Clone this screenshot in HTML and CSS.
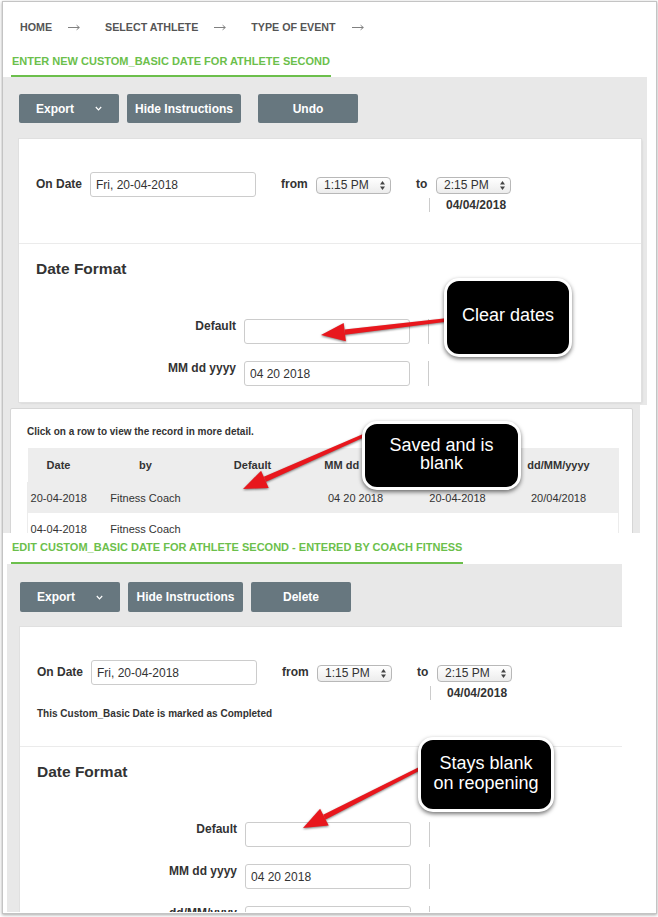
FILE: index.html
```html
<!DOCTYPE html>
<html lang="en">
<head>
<meta charset="utf-8">
<title>Custom_Basic Date</title>
<link rel="stylesheet" href="styles.css">
</head>
<body>
<div class="frame">
  <section class="shot shot-new">
    <nav class="crumbs">
      <span>HOME</span><svg class="crumb-arrow" width="12" height="7" viewBox="0 0 12 7"><path d="M0 3.5H11.3M8.6 1.2l2.7 2.3l-2.7 2.3" fill="none" stroke="#808080" stroke-width="1"/></svg>
      <span>SELECT ATHLETE</span><svg class="crumb-arrow" width="12" height="7" viewBox="0 0 12 7"><path d="M0 3.5H11.3M8.6 1.2l2.7 2.3l-2.7 2.3" fill="none" stroke="#808080" stroke-width="1"/></svg>
      <span>TYPE OF EVENT</span><svg class="crumb-arrow" width="12" height="7" viewBox="0 0 12 7"><path d="M0 3.5H11.3M8.6 1.2l2.7 2.3l-2.7 2.3" fill="none" stroke="#808080" stroke-width="1"/></svg>
    </nav>
    <div class="title-wrap"><h1 class="title">ENTER NEW CUSTOM_BASIC DATE FOR ATHLETE SECOND</h1></div>
    <div class="panel">
      <div class="toolbar">
        <button class="btn btn-export">Export<svg class="chev" width="7" height="5" viewBox="0 0 7 5"><polyline points="0.8,1 3.5,3.8 6.2,1" fill="none" stroke="#fff" stroke-width="1.2"/></svg></button>
        <button class="btn btn-hide">Hide Instructions</button>
        <button class="btn btn-undo">Undo</button>
      </div>
      <div class="card">
        <div class="when">
          <div class="date-row">
            <span class="lbl lbl-on">On Date</span>
            <input class="field field-date" type="text" value="Fri, 20-04-2018" readonly>
            <span class="lbl lbl-from">from</span>
            <div class="select"><span>1:15 PM</span><svg class="updown" width="5" height="9" viewBox="0 0 5 9"><polygon points="0,3.5 2.5,0 5,3.5"/><polygon points="0,5.5 2.5,9 5,5.5"/></svg></div>
            <span class="lbl lbl-to">to</span>
            <div class="to-col">
              <div class="select"><span>2:15 PM</span><svg class="updown" width="5" height="9" viewBox="0 0 5 9"><polygon points="0,3.5 2.5,0 5,3.5"/><polygon points="0,5.5 2.5,9 5,5.5"/></svg></div>
              <div class="sub"><span class="sub-bar"></span><span class="sub-date">04/04/2018</span></div>
            </div>
          </div>
        </div>
        <div class="formats">
          <h2 class="fmt-title">Date Format</h2>
          <div class="frow frow-first"><label class="flabel">Default</label><input class="field field-fmt" type="text" value="" readonly><span class="vbar"></span></div>
          <div class="frow"><label class="flabel">MM dd yyyy</label><input class="field field-fmt" type="text" value="04 20 2018" readonly><span class="vbar"></span></div>
        </div>
      </div>
    </div>
  </section>

  <section class="shot shot-list">
    <div class="list-card">
      <p class="hint">Click on a row to view the record in more detail.</p>
      <table class="records">
        <colgroup><col class="c1"><col class="c2"><col class="c3"><col class="c4"><col class="c5"><col class="c6"><col class="c7"></colgroup>
        <thead><tr><th>Date</th><th>by</th><th>Default</th><th>MM dd yyyy</th><th></th><th>dd/MM/yyyy</th><th></th></tr></thead>
        <tbody>
          <tr class="alt"><td>20-04-2018</td><td>Fitness Coach</td><td></td><td>04 20 2018</td><td>20-04-2018</td><td>20/04/2018</td><td></td></tr>
          <tr><td>04-04-2018</td><td>Fitness Coach</td><td></td><td></td><td></td><td></td><td></td></tr>
        </tbody>
      </table>
    </div>
  </section>

  <section class="shot shot-edit">
    <div class="title-wrap"><h1 class="title title-edit">EDIT CUSTOM_BASIC DATE FOR ATHLETE SECOND - ENTERED BY COACH FITNESS</h1></div>
    <div class="panel panel-edit">
      <div class="toolbar toolbar-edit">
        <button class="btn btn-export">Export<svg class="chev" width="7" height="5" viewBox="0 0 7 5"><polyline points="0.8,1 3.5,3.8 6.2,1" fill="none" stroke="#fff" stroke-width="1.2"/></svg></button>
        <button class="btn btn-hide-e">Hide Instructions</button>
        <button class="btn btn-delete">Delete</button>
      </div>
      <div class="card card-edit">
        <div class="when when-edit">
          <div class="date-row">
            <span class="lbl lbl-on">On Date</span>
            <input class="field field-date" type="text" value="Fri, 20-04-2018" readonly>
            <span class="lbl lbl-from">from</span>
            <div class="select"><span>1:15 PM</span><svg class="updown" width="5" height="9" viewBox="0 0 5 9"><polygon points="0,3.5 2.5,0 5,3.5"/><polygon points="0,5.5 2.5,9 5,5.5"/></svg></div>
            <span class="lbl lbl-to">to</span>
            <div class="to-col">
              <div class="select"><span>2:15 PM</span><svg class="updown" width="5" height="9" viewBox="0 0 5 9"><polygon points="0,3.5 2.5,0 5,3.5"/><polygon points="0,5.5 2.5,9 5,5.5"/></svg></div>
              <div class="sub"><span class="sub-bar"></span><span class="sub-date">04/04/2018</span></div>
            </div>
          </div>
          <p class="done">This Custom_Basic Date is marked as Completed</p>
        </div>
        <div class="formats">
          <h2 class="fmt-title">Date Format</h2>
          <div class="frow frow-first"><label class="flabel">Default</label><input class="field field-fmt" type="text" value="" readonly><span class="vbar"></span></div>
          <div class="frow"><label class="flabel">MM dd yyyy</label><input class="field field-fmt" type="text" value="04 20 2018" readonly><span class="vbar"></span></div>
          <div class="frow"><label class="flabel">dd/MM/yyyy</label><input class="field field-fmt" type="text" value="20/04/2018" readonly><span class="vbar"></span></div>
        </div>
      </div>
    </div>
  </section>
</div>

<svg class="arrows" viewBox="0 0 658 917" xmlns="http://www.w3.org/2000/svg">
  <g class="arrow">
    <polygon points="445.8,318.3 446.2,321.7 345.1,334.8 344.5,329.4"/>
    <polygon points="321,335 345.9,341.2 343.7,323"/>
  </g>
  <g class="arrow">
    <polygon points="364.3,433.4 365.7,436.6 266,481.8 263.8,476.8"/>
    <polygon points="243,489 268.7,487.9 261.1,470.7"/>
  </g>
  <g class="arrow">
    <polygon points="420.2,766.4 421.8,769.6 325.6,819.5 323.2,814.7"/>
    <polygon points="303,828 328.7,825.5 320.1,808.7"/>
  </g>
</svg>

<div class="callout callout-clear">Clear dates</div>
<div class="callout callout-saved">Saved and is<br>blank</div>
<div class="callout callout-stays">Stays blank<br>on reopening</div>
</body>
</html>
```

FILE: styles.css
```css
* { box-sizing: border-box; margin: 0; padding: 0; }
html, body { background: #fff; }
body {
  position: relative;
  width: 658px;
  height: 917px;
  padding: 1px 0 0 2px;
  overflow: hidden;
  font-family: "Liberation Sans", Arial, Helvetica, sans-serif;
  color: #333;
}

.frame {
  width: 655px;
  height: 913px;
  border: 1px solid #c4c4c4;
  box-shadow: 0 1px 3px rgba(0, 0, 0, 0.35);
  overflow: hidden;
  background: #fff;
}

.shot { overflow: hidden; }
.shot-new { height: 403px; }

/* breadcrumb */
.crumbs {
  display: flex;
  align-items: flex-start;
  height: 44px;
  padding: 18px 0 0 17px;
  font-size: 10.7px;
  font-weight: bold;
  line-height: 14px;
  color: #555;
}
.crumb-arrow {
  flex: none;
  margin: 3.5px 25px 0 16px;
}

/* green page title */
.title-wrap { height: 31px; padding-left: 8px; }
.title {
  display: inline-block;
  padding: 8px 1px 7px;
  font-size: 11px;
  line-height: 14px;
  font-weight: bold;
  color: #6cbf4c;
  border-bottom: 2px solid #6cbf4c;
}
.title-edit { padding: 8px 1px 8px; line-height: 13px; }

/* grey panel */
.panel {
  width: 644px;
  height: 328px;
  padding: 17px 0 0 16px;
  background: #e8e8e8;
  overflow: hidden;
}
.panel-edit {
  width: 615px;
  height: 348px;
  margin-left: 4px;
  padding: 18px 0 0 13px;
}

.toolbar { display: flex; height: 29px; }
.toolbar-edit { height: 30px; }
.btn {
  display: flex;
  align-items: center;
  justify-content: center;
  height: 100%;
  border: 0;
  border-radius: 2px;
  background: #67777f;
  color: #fff;
  font-family: inherit;
  font-size: 12px;
  font-weight: bold;
}
.btn-export { width: 100px; justify-content: flex-start; padding-left: 17px; }
.chev { margin-left: 21px; }
.btn-hide { width: 114px; margin-left: 8px; }
.btn-undo { width: 100px; margin-left: 17px; }
.btn-hide-e { width: 115px; margin-left: 8px; }
.btn-delete { width: 100px; margin-left: 8px; }

/* white card */
.card {
  width: 622px;
  height: 263px;
  margin-top: 16px;
  background: #fff;
  box-shadow: 0 0 0 1px #e0e0e0, 1px 1px 2px rgba(0, 0, 0, 0.12);
  overflow: hidden;
}
.card-edit { width: 602px; height: 300px; margin-top: 15px; }

.when {
  height: 105px;
  padding: 33px 0 0 17px;
  border-bottom: 1px solid #ebebeb;
}
.when-edit { height: 120px; }

.date-row { display: flex; align-items: flex-start; }
.lbl {
  font-size: 12px;
  font-weight: bold;
  line-height: 25px;
  white-space: nowrap;
}
.lbl-on { width: 54px; }
.lbl-from { width: 35px; margin-left: 25px; }
.lbl-to { width: 13px; margin-left: 25px; }

.field {
  height: 25px;
  padding: 0 5px;
  border: 1px solid #ccc;
  border-radius: 3px;
  background: #fff;
  font-family: inherit;
  font-size: 12px;
  color: #333;
  outline: none;
}
.field-date { width: 166px; }
.field-fmt { width: 166px; }

.select {
  display: flex;
  align-items: center;
  justify-content: space-between;
  width: 75px;
  height: 17px;
  margin-top: 5px;
  padding: 0 5px 0 7px;
  border: 1px solid #b8b8b8;
  border-radius: 4px;
  background: linear-gradient(#fff, #ececec);
  font-size: 12px;
  line-height: 15px;
  color: #333;
}
.updown { fill: #444; }
.to-col .select { margin-left: 7px; }
.sub { display: flex; height: 14px; margin-top: 4px; }
.sub-bar { width: 0; height: 14px; border-left: 1px solid #ccc; }
.sub-date {
  margin-left: 16px;
  font-size: 12px;
  font-weight: bold;
  line-height: 14px;
}
.done {
  margin-top: 8px;
  font-size: 10px;
  font-weight: bold;
  line-height: 12px;
}

.formats { padding: 16px 0 0 17px; }
.fmt-title {
  font-size: 15.5px;
  line-height: 18px;
  font-weight: bold;
  color: #333;
}
.frow { display: flex; align-items: flex-start; margin-top: 17px; }
.frow-first { margin-top: 41px; }
.flabel {
  width: 200px;
  margin-right: 8px;
  text-align: right;
  font-size: 12px;
  font-weight: bold;
  line-height: 14px;
}
.vbar { width: 0; height: 25px; margin-left: 18px; border-left: 1px solid #ccc; }

/* list screenshot */
.shot-list {
  width: 637px;
  height: 128px;
  padding: 3px 0 0 7px;
  background: #e8e8e8;
}
.list-card {
  width: 623px;
  height: 140px;
  padding: 17px 0 0 16px;
  background: #fff;
  border: 1px solid #d6d6d6;
  border-radius: 2px;
}
.hint {
  font-size: 10px;
  font-weight: bold;
  line-height: 12px;
  color: #333;
}
.records {
  width: 591px;
  margin-top: 10px;
  border-collapse: collapse;
  table-layout: fixed;
  font-size: 11px;
  color: #333;
}
.c1 { width: 62px; }
.c2 { width: 112px; }
.c3 { width: 102px; }
.c4 { width: 104px; }
.c5 { width: 100px; }
.c6 { width: 102px; }
.c7 { width: 9px; }
.records th {
  height: 34px;
  font-weight: bold;
  text-align: center;
  background: #ededed;
  white-space: nowrap;
}
.records td {
  height: 31px;
  text-align: center;
  white-space: nowrap;
}
.records tbody tr { border-left: 1px solid #ececec; border-right: 1px solid #ececec; }
.records .alt td { background: #ededed; }

.shot-edit { height: 379px; }

/* annotation overlays */
.arrows {
  position: absolute;
  left: 0;
  top: 0;
  z-index: 1;
  width: 658px;
  height: 917px;
  pointer-events: none;
}
.arrow {
  fill: #e8171d;
  filter: drop-shadow(0 1px 1px rgba(0, 0, 0, 0.5));
}
.callout {
  position: absolute;
  z-index: 2;
  display: flex;
  align-items: center;
  justify-content: center;
  text-align: center;
  background: #000;
  color: #fff;
  border: 3px solid #fff;
  border-radius: 15px;
  box-shadow: 0 2px 4px rgba(0, 0, 0, 0.55);
  font-size: 18px;
}
.callout-clear { left: 444px; top: 278px; width: 128px; height: 79px; line-height: 20px; padding-bottom: 5px; }
.callout-saved { left: 362px; top: 421px; width: 159px; height: 69px; line-height: 18px; padding-bottom: 3px; }
.callout-stays { left: 418px; top: 737px; width: 136px; height: 75px; line-height: 20px; padding-bottom: 3px; }
```
